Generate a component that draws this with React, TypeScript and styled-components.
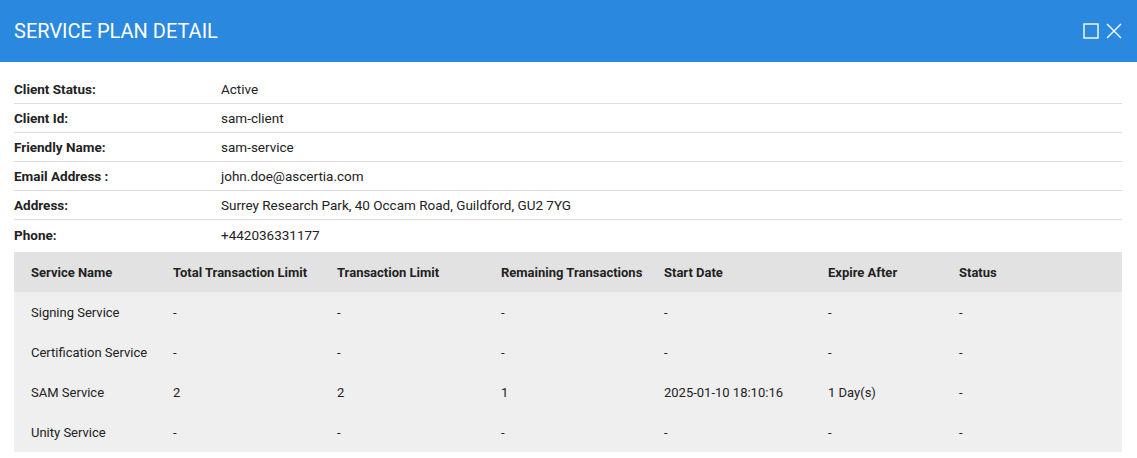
import styled, { createGlobalStyle } from 'styled-components';

const GlobalStyle = createGlobalStyle`
    html, body {
        margin: 0;
        padding: 0;
        background: #fff;
        font-family: Roboto, "Liberation Sans", Arial, sans-serif;
        color: #222;
    }
`;

const Dialog = styled.div`
    width: 1137px;
    height: 458px;
    background: #fff;
    overflow: hidden;
`;

const Header = styled.div`
    display: flex;
    align-items: center;
    justify-content: space-between;
    height: 62px;
    padding: 0 15px 0 14px;
    box-sizing: border-box;
    background-color: #2a88de;
    color: #fff;
`;

const Title = styled.h1`
    margin: 0;
    font-size: 20px;
    font-weight: 400;
    text-transform: uppercase;
`;

const Actions = styled.div`
    display: flex;
    align-items: center;
    gap: 7px;
`;

const IconButton = styled.button`
    display: flex;
    padding: 0;
    border: 0;
    background: transparent;
    color: #fff;
    cursor: pointer;
`;

const Body = styled.div`
    padding: 13px 15px 0 14px;
`;

const InfoRow = styled.div`
    display: grid;
    grid-template-columns: 207px 1fr;
    align-items: center;
    height: 29px;
    font-size: 13.5px;
    border-bottom: 1px solid #dedede;
    box-sizing: border-box;
    &:last-of-type {
        border-bottom: 0;
    }
`;

const Label = styled.div`
    font-weight: 700;
    color: #222;
`;

const Value = styled.div`
    color: #222;
`;

const Table = styled.table`
    width: 100%;
    margin-top: 3px;
    border-collapse: collapse;
    table-layout: fixed;
    font-size: 13px;
    background: #efefef;
`;

const Th = styled.th<{ $w?: number }>`
    box-sizing: border-box;
    width: ${p => (p.$w ? `${p.$w}px` : 'auto')};
    height: 40px;
    padding: 0 0 0 17px;
    text-align: left;
    font-weight: 700;
    color: #222;
    background: #e2e2e2;
    white-space: nowrap;
`;

const Td = styled.td`
    height: 40px;
    padding: 0 0 0 17px;
    color: #222;
    white-space: nowrap;
`;

const info = [
    ['Client Status:', 'Active'],
    ['Client Id:', 'sam-client'],
    ['Friendly Name:', 'sam-service'],
    ['Email Address :', 'john.doe@ascertia.com'],
    ['Address:', 'Surrey Research Park, 40 Occam Road, Guildford, GU2 7YG'],
    ['Phone:', '+442036331177'],
];

const columns: [string, number?][] = [
    ['Service Name', 142],
    ['Total Transaction Limit', 164],
    ['Transaction Limit', 164],
    ['Remaining Transactions', 163],
    ['Start Date', 164],
    ['Expire After', 131],
    ['Status'],
];

const rows = [
    ['Signing Service', '-', '-', '-', '-', '-', '-'],
    ['Certification Service', '-', '-', '-', '-', '-', '-'],
    ['SAM Service', '2', '2', '1', '2025-01-10 18:10:16', '1 Day(s)', '-'],
    ['Unity Service', '-', '-', '-', '-', '-', '-'],
];

const App = () => {
    return <>
        <GlobalStyle />
        <Dialog>
            <Header>
                <Title>Service Plan Detail</Title>
                <Actions>
                    <IconButton aria-label="Maximize">
                        <svg width="16" height="16" viewBox="0 0 16 16">
                            <rect x="1" y="1" width="14" height="14" fill="none" stroke="currentColor" strokeWidth="1.4" />
                        </svg>
                    </IconButton>
                    <IconButton aria-label="Close">
                        <svg width="16" height="16" viewBox="0 0 16 16">
                            <path d="M1 1 L15 15 M15 1 L1 15" stroke="currentColor" strokeWidth="1.4" />
                        </svg>
                    </IconButton>
                </Actions>
            </Header>
            <Body>
                {info.map(([label, value]) => (
                    <InfoRow key={label}>
                        <Label>{label}</Label>
                        <Value>{value}</Value>
                    </InfoRow>
                ))}
                <Table>
                    <thead>
                        <tr>
                            {columns.map(([name, w]) => <Th key={name} $w={w}>{name}</Th>)}
                        </tr>
                    </thead>
                    <tbody>
                        {rows.map(r => (
                            <tr key={r[0]}>
                                {r.map((c, i) => <Td key={i}>{c}</Td>)}
                            </tr>
                        ))}
                    </tbody>
                </Table>
            </Body>
        </Dialog>
    </>;
};

export default App;
